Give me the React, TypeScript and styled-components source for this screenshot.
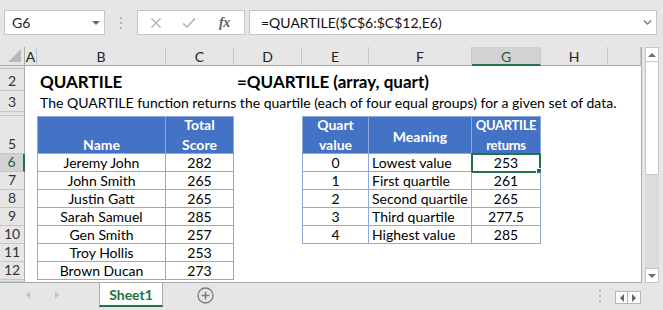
import React from 'react';
import styled, { createGlobalStyle } from 'styled-components';

const FONT = `Lato, "Liberation Sans", sans-serif`;
const GREEN = '#217346';
const BLUE = '#4472c4';
const LINE_BLUE = '#8eaadb';

const GlobalStyle = createGlobalStyle`
  html, body { margin: 0; padding: 0; background: #e6e6e6; }
  body { font-family: ${FONT}; }
  * { box-sizing: border-box; }
`;

const Window = styled.div`
  width: 663px;
  height: 310px;
  overflow: hidden;
  background: #e6e6e6;
  display: flex;
  flex-direction: column;
  font-family: ${FONT};
  color: #000;
`;

/* ---------- formula toolbar ---------- */
const Toolbar = styled.div`
  height: 47px;
  flex: none;
  padding: 10px 0 0 4px;
  display: flex;
  align-items: flex-start;
`;

const NameBox = styled.div`
  width: 101px;
  height: 25px;
  border: 1px solid #c6c6c6;
  background: #fff;
  display: flex;
  align-items: center;
  justify-content: space-between;
  padding: 0 4px 0 7px;
  font-size: 14px;
  color: #222;
`;

const Grip = styled.div`
  width: 2px;
  height: 25px;
  margin: 0 15px 0 15px;
  display: flex;
  flex-direction: column;
  justify-content: center;
  gap: 3px;
  & > span {
    width: 2px;
    height: 2px;
    background: #b4b4b4;
  }
`;

const FxBox = styled.div`
  width: 108px;
  height: 25px;
  border: 1px solid #c6c6c6;
  background: #fff;
  display: flex;
  align-items: center;
  padding-left: 12px;
  gap: 20px;
`;

const FxLabel = styled.span`
  font-family: "Liberation Serif", serif;
  font-style: italic;
  font-weight: bold;
  font-size: 14px;
  color: #5e5e5e;
  margin-left: 3px;
  letter-spacing: -0.5px;
`;

const FormulaInput = styled.div`
  width: 408px;
  height: 25px;
  margin-left: 4px;
  border: 1px solid #c6c6c6;
  background: #fff;
  display: flex;
  align-items: center;
  justify-content: space-between;
  padding: 0 4px 0 11px;
  font-size: 14px;
  color: #111;
`;

/* ---------- sheet ---------- */
const Middle = styled.div`
  display: flex;
  height: 236px;
  flex: none;
`;

const Sheet = styled.div`
  width: 642px;
  height: 236px;
  display: grid;
  grid-template-columns: 25px 12px 129px 68px 68px 67px 103px 69px 67px 33px;
  grid-template-rows: 19px 3px 22px 21px 4px 38px repeat(7, 18px) 1fr;
  background: #fff;
  border-right: 1px solid #ababab;
  border-bottom: 1px solid #ababab;
`;

const Corner = styled.div`
  grid-column: 1;
  grid-row: 1;
  background: #e6e6e6;
  border-right: 1px solid #ababab;
  border-bottom: 1px solid #ababab;
  display: flex;
  align-items: flex-end;
  justify-content: flex-end;
  padding: 0 3px 3px 0;
`;

const ColHead = styled.div<{ $c: number; $sel?: boolean }>`
  grid-column: ${p => p.$c};
  grid-row: 1;
  background: ${p => (p.$sel ? '#d2d2d2' : '#e6e6e6')};
  border-right: 1px solid #c6c6c6;
  border-bottom: ${p => (p.$sel ? `2px solid ${GREEN}` : '1px solid #ababab')};
  display: flex;
  align-items: center;
  justify-content: center;
  font-size: 14px;
  color: ${p => (p.$sel ? '#1d5f3a' : '#222')};
  padding-top: ${p => (p.$sel ? '1px' : '0')};
`;

const RowHead = styled.div<{ $r: number; $sel?: boolean }>`
  grid-column: 1;
  grid-row: ${p => p.$r};
  background: ${p => (p.$sel ? '#d2d2d2' : '#e6e6e6')};
  border-right: ${p => (p.$sel ? `2px solid ${GREEN}` : '1px solid #ababab')};
  border-bottom: 1px solid #c6c6c6;
  display: flex;
  align-items: flex-end;
  justify-content: center;
  font-size: 14px;
  line-height: 18px;
  color: ${p => (p.$sel ? '#1d5f3a' : '#333')};
  overflow: hidden;
`;

type CellProps = {
  $c: number;
  $r: number;
  $span?: number;
  $kind?: 'plain' | 'head' | 'data';
  $left?: boolean;
  $top?: boolean;
  $align?: 'left' | 'center';
  $mid?: boolean;
  $big?: boolean;
  $narrow?: boolean;
};

const Cell = styled.div<CellProps>`
  grid-column: ${p => p.$c} / span ${p => p.$span ?? 1};
  grid-row: ${p => p.$r};
  position: relative;
  display: flex;
  align-items: ${p => (p.$mid ? 'center' : 'flex-end')};
  justify-content: ${p => (p.$align === 'left' ? 'flex-start' : 'center')};
  padding: ${p => (p.$kind === 'head' ? (p.$mid ? '3px 3px 0' : '0 3px 1px') : '0 3px')};
  white-space: nowrap;
  font-size: ${p => (p.$big ? '17px' : p.$narrow ? '13px' : '14px')};
  letter-spacing: ${p => (p.$narrow ? '-0.3px' : 'normal')};
  font-weight: ${p => (p.$kind === 'head' || p.$big ? 700 : 400)};
  line-height: ${p => (p.$kind === 'head' ? '14px' : '18px')};
  text-align: center;
  background: ${p => (p.$kind === 'head' ? BLUE : 'transparent')};
  color: ${p => (p.$kind === 'head' ? '#fff' : '#000')};
  border-right: ${p => (p.$kind && p.$kind !== 'plain' ? `1px solid ${LINE_BLUE}` : 'none')};
  border-bottom: ${p => (p.$kind && p.$kind !== 'plain' ? `1px solid ${LINE_BLUE}` : 'none')};
  border-left: ${p => (p.$left ? `1px solid ${LINE_BLUE}` : 'none')};
  border-top: ${p => (p.$top ? `1px solid ${LINE_BLUE}` : 'none')};
`;

const HeadLines = styled.div`
  display: flex;
  flex-direction: column;
  align-items: center;
  gap: 6px;
`;

const Selection = styled.div`
  position: absolute;
  left: -1px;
  right: -1px;
  top: -1px;
  bottom: -2px;
  border: 2px solid ${GREEN};
  pointer-events: none;
`;

const FillHandle = styled.div`
  position: absolute;
  right: -3px;
  bottom: -3px;
  width: 6px;
  height: 6px;
  background: ${GREEN};
  border: 1px solid #fff;
`;

/* ---------- vertical scrollbar ---------- */
const VScroll = styled.div`
  width: 21px;
  height: 236px;
  padding: 0 4px 0 3px;
  display: flex;
  flex-direction: column;
`;

const ScrollBtn = styled.div`
  width: 14px;
  height: 15px;
  flex: none;
  background: #fff;
  border: 1px solid #c6c6c6;
  display: flex;
  align-items: center;
  justify-content: center;
`;

const Thumb = styled.div`
  height: 113px;
  flex: none;
  background: #fff;
  border: 1px solid #c6c6c6;
  border-top: none;
`;

const Track = styled.div`
  flex: 1;
  background: #dcdcdc;
`;

/* ---------- tab bar ---------- */
const TabBar = styled.div`
  flex: 1;
  display: flex;
  align-items: flex-start;
`;

const NavArrows = styled.div`
  width: 99px;
  height: 24px;
  display: flex;
  align-items: center;
  padding-left: 26px;
  gap: 25px;
`;

const Tab = styled.div`
  width: 64px;
  height: 24px;
  background: #fff;
  border-left: 1px solid #ababab;
  border-right: 1px solid #ababab;
  border-bottom: 2px solid ${GREEN};
  display: flex;
  align-items: center;
  justify-content: center;
  font-size: 14px;
  font-weight: 700;
  color: ${GREEN};
`;

const AddSheet = styled.div`
  margin-left: 34px;
  height: 24px;
  display: flex;
  align-items: center;
`;

const TabSpacer = styled.div`
  flex: 1;
`;

const SizeGrip = styled.div`
  height: 26px;
  width: 2px;
  margin-right: 14px;
  display: flex;
  flex-direction: column;
  justify-content: center;
  gap: 3px;
  & > span {
    width: 2px;
    height: 2px;
    background: #b4b4b4;
  }
`;

const HButtons = styled.div`
  margin-top: 8px;
  margin-right: 22px;
  display: flex;
`;

const HBtn = styled.div`
  width: 13px;
  height: 13px;
  background: #fafafa;
  border: 1px solid #b4b4b4;
  display: flex;
  align-items: center;
  justify-content: center;
  & + & {
    border-left: none;
  }
`;

/* ---------- data ---------- */
const people: [string, string][] = [
  ['Jeremy John', '282'],
  ['John Smith', '265'],
  ['Justin Gatt', '265'],
  ['Sarah Samuel', '285'],
  ['Gen Smith', '257'],
  ['Troy Hollis', '253'],
  ['Brown Ducan', '273'],
];

const quarts: [string, string, string][] = [
  ['0', 'Lowest value', '253'],
  ['1', 'First quartile', '261'],
  ['2', 'Second quartile', '265'],
  ['3', 'Third quartile', '277.5'],
  ['4', 'Highest value', '285'],
];

const colLetters = ['A', 'B', 'C', 'D', 'E', 'F', 'G', 'H', ''];

// grid row index for sheet row numbers (grid row 1 = column headers)
const rowLabels: { r: number; label: string }[] = [
  { r: 2, label: '' },
  { r: 3, label: '2' },
  { r: 4, label: '3' },
  { r: 5, label: '' },
  { r: 6, label: '5' },
  { r: 7, label: '6' },
  { r: 8, label: '7' },
  { r: 9, label: '8' },
  { r: 10, label: '9' },
  { r: 11, label: '10' },
  { r: 12, label: '11' },
  { r: 13, label: '12' },
  { r: 14, label: '' },
];

const Tri = ({ dir, color, size = 4 }: { dir: 'up' | 'down' | 'left' | 'right'; color: string; size?: number }) => {
  const s = size;
  const pts =
    dir === 'down'
      ? `0,0 ${2 * s},0 ${s},${s}`
      : dir === 'up'
      ? `0,${s} ${2 * s},${s} ${s},0`
      : dir === 'left'
      ? `${s},0 ${s},${2 * s} 0,${s}`
      : `0,0 0,${2 * s} ${s},${s}`;
  const w = dir === 'up' || dir === 'down' ? 2 * s : s;
  const h = dir === 'up' || dir === 'down' ? s : 2 * s;
  return (
    <svg width={w} height={h} viewBox={`0 0 ${w} ${h}`}>
      <polygon points={pts} fill={color} />
    </svg>
  );
};

export default function App() {
  return (
    <>
      <GlobalStyle />
      <Window>
        <Toolbar>
          <NameBox>
            <span>G6</span>
            <Tri dir="down" color="#6f6f6f" size={4} />
          </NameBox>
          <Grip>
            <span />
            <span />
            <span />
          </Grip>
          <FxBox>
            <svg width="12" height="12" viewBox="0 0 12 12">
              <path d="M1.5 1.5 L10.5 10.5 M10.5 1.5 L1.5 10.5" stroke="#b0b0b0" strokeWidth="1.4" fill="none" />
            </svg>
            <svg width="14" height="12" viewBox="0 0 14 12">
              <path d="M1 6.5 L5 10 L13 1.5" stroke="#b0b0b0" strokeWidth="1.6" fill="none" />
            </svg>
            <FxLabel>fx</FxLabel>
          </FxBox>
          <FormulaInput>
            <span>=QUARTILE($C$6:$C$12,E6)</span>
            <svg width="9" height="7" viewBox="0 0 9 7">
              <path d="M1 1.5 L4.5 5 L8 1.5" stroke="#7a7a7a" strokeWidth="1.4" fill="none" />
            </svg>
          </FormulaInput>
        </Toolbar>

        <Middle>
          <Sheet>
            <Corner>
              <svg width="13" height="13" viewBox="0 0 13 13">
                <polygon points="13,0 13,13 0,13" fill="#b9b9b9" />
              </svg>
            </Corner>
            {colLetters.map((l, i) => (
              <ColHead key={i} $c={i + 2} $sel={l === 'G'}>
                {l}
              </ColHead>
            ))}
            {rowLabels.map(({ r, label }) => (
              <RowHead key={r} $r={r} $sel={label === '6'}>
                {label}
              </RowHead>
            ))}

            {/* row 2: title */}
            <Cell $c={3} $r={3} $align="left" $big>
              QUARTILE
            </Cell>
            <Cell $c={5} $r={3} $span={4} $align="left" $big>
              =QUARTILE (array, quart)
            </Cell>

            {/* row 3: description */}
            <Cell $c={3} $r={4} $span={8} $align="left">
              The QUARTILE function returns the quartile (each of four equal groups) for a given set of data.
            </Cell>

            {/* table 1 header */}
            <Cell $c={3} $r={6} $kind="head" $left $top>
              <HeadLines>
                <span>Name</span>
              </HeadLines>
            </Cell>
            <Cell $c={4} $r={6} $kind="head" $top>
              <HeadLines>
                <span>Total</span>
                <span>Score</span>
              </HeadLines>
            </Cell>
            {people.map(([name, score], i) => (
              <React.Fragment key={name}>
                <Cell $c={3} $r={7 + i} $kind="data" $left $mid>
                  {name}
                </Cell>
                <Cell $c={4} $r={7 + i} $kind="data" $mid>
                  {score}
                </Cell>
              </React.Fragment>
            ))}

            {/* table 2 header */}
            <Cell $c={6} $r={6} $kind="head" $left $top>
              <HeadLines>
                <span>Quart</span>
                <span>value</span>
              </HeadLines>
            </Cell>
            <Cell $c={7} $r={6} $kind="head" $top $mid>
              Meaning
            </Cell>
            <Cell $c={8} $r={6} $kind="head" $top $narrow>
              <HeadLines>
                <span>QUARTILE</span>
                <span>returns</span>
              </HeadLines>
            </Cell>
            {quarts.map(([q, meaning, ret], i) => (
              <React.Fragment key={q}>
                <Cell $c={6} $r={7 + i} $kind="data" $left $mid>
                  {q}
                </Cell>
                <Cell $c={7} $r={7 + i} $kind="data" $align="left" $mid>
                  {meaning}
                </Cell>
                <Cell $c={8} $r={7 + i} $kind="data" $mid>
                  {ret}
                  {i === 0 && (
                    <Selection>
                      <FillHandle />
                    </Selection>
                  )}
                </Cell>
              </React.Fragment>
            ))}
          </Sheet>

          <VScroll>
            <ScrollBtn>
              <Tri dir="up" color="#6f6f6f" size={4} />
            </ScrollBtn>
            <Thumb />
            <Track />
            <ScrollBtn>
              <Tri dir="down" color="#6f6f6f" size={4} />
            </ScrollBtn>
          </VScroll>
        </Middle>

        <TabBar>
          <NavArrows>
            <Tri dir="left" color="#c2c2c2" size={4} />
            <Tri dir="right" color="#c2c2c2" size={4} />
          </NavArrows>
          <Tab>Sheet1</Tab>
          <AddSheet>
            <svg width="17" height="17" viewBox="0 0 17 17">
              <circle cx="8.5" cy="8.5" r="7.5" stroke="#7d7d7d" strokeWidth="1.3" fill="none" />
              <path d="M8.5 4.5 V12.5 M4.5 8.5 H12.5" stroke="#7d7d7d" strokeWidth="1.5" />
            </svg>
          </AddSheet>
          <TabSpacer />
          <SizeGrip>
            <span />
            <span />
            <span />
          </SizeGrip>
          <HButtons>
            <HBtn>
              <Tri dir="left" color="#666" size={4} />
            </HBtn>
            <HBtn>
              <Tri dir="right" color="#666" size={4} />
            </HBtn>
          </HButtons>
        </TabBar>
      </Window>
    </>
  );
}
